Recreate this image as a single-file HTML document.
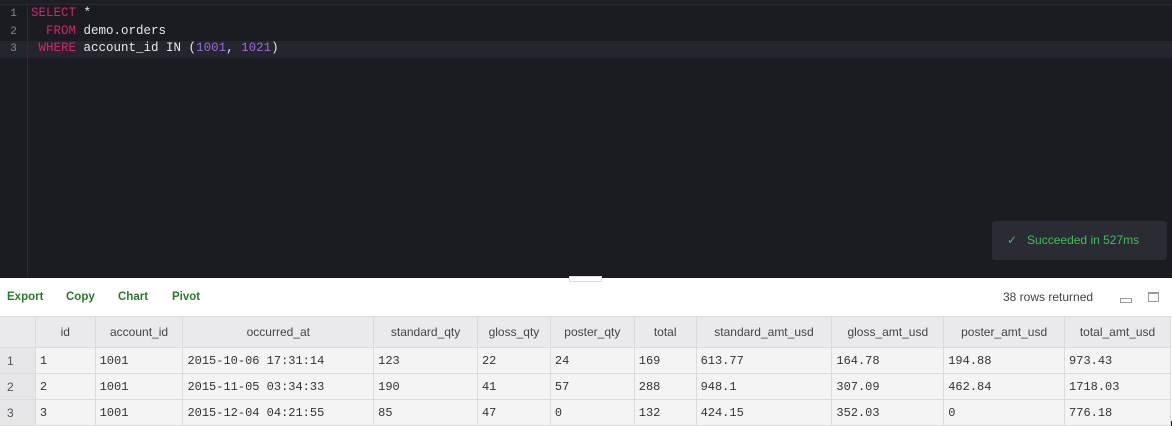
<!DOCTYPE html>
<html><head><style>
body{margin:0;width:1172px;height:421px;overflow:hidden;background:#1b1b22;font-family:"Liberation Sans",sans-serif;position:relative}
.top{position:absolute;left:0;top:0;width:1172px;height:4px;background:#1e1e25;border-bottom:1px solid #2a2a32}
.gut{position:absolute;left:27px;top:5px;width:1px;height:272px;background:#2c2c34}
.ln{position:absolute;left:0;width:27px;text-align:center;color:#8a8a92;font:11px "Liberation Mono",monospace}
.code{position:absolute;left:31px;font:12.5px "Liberation Mono",monospace;color:#e8e8ec;white-space:pre}
.kw{color:#d6246a}.num{color:#9b6bdb}
.hl{position:absolute;left:0;top:41px;width:1172px;height:17px;background:#25252d}
.toast{position:absolute;left:992px;top:221px;width:175px;height:39px;background:#2b2b33;border-radius:3px;color:#3fbf5a;font-size:12px;line-height:39px;box-sizing:border-box;padding-left:15px}
.panel{position:absolute;left:0;top:278px;width:1172px;height:143px;background:#fff}
.handle{position:absolute;left:569px;top:276px;width:31px;height:4px;border:1px solid #ddd;background:#fff}
.tb{position:absolute;top:291px;font-size:11.5px;font-weight:bold;color:#2a7a2a}
table{position:absolute;left:-1px;top:316px;border-collapse:collapse;font-size:12px;color:#333}
td{border:1px solid #dcdcdc;padding:0 4px;height:25px;white-space:nowrap;overflow:hidden;background:#f4f4f4}
tr.h td{background:#eaeaee;text-align:center;height:30px;color:#444}
td.r{background:#e6e6e9;color:#555;padding-left:7px}
td.m{font-family:"Liberation Mono",monospace;font-size:12px}
</style></head><body>
<div class="top"></div>
<div class="hl"></div>
<div class="gut"></div>
<div class="ln" style="top:8px">1</div>
<div class="ln" style="top:26px">2</div>
<div class="ln" style="top:43px">3</div>
<div class="code" style="top:6px"><span class="kw">SELECT</span> *</div>
<div class="code" style="top:24px">  <span class="kw">FROM</span> demo.orders</div>
<div class="code" style="top:41px"> <span class="kw">WHERE</span> account_id IN (<span class="num">1001</span>, <span class="num">1021</span>)</div>
<div class="toast">✓&nbsp;&nbsp; Succeeded in 527ms</div>
<div class="panel"></div>
<div class="handle"></div>
<div class="tb" style="left:7px">Export</div>
<div class="tb" style="left:66px">Copy</div>
<div class="tb" style="left:118px">Chart</div>
<div class="tb" style="left:172px">Pivot</div>
<div style="position:absolute;left:1003px;top:290px;font-size:12px;color:#444">38 rows returned</div>
<div style="position:absolute;left:1120px;top:298px;width:10px;height:3px;border:1px solid #999"></div>
<div style="position:absolute;left:1148px;top:292px;width:9px;height:7px;border:1px solid #999;border-top-width:2px"></div>
<table>
<colgroup><col style="width:36px"><col style="width:60px"><col style="width:88px"><col style="width:191px"><col style="width:104px"><col style="width:73px"><col style="width:84px"><col style="width:62px"><col style="width:136px"><col style="width:112px"><col style="width:121px"><col style="width:106px"></colgroup>
<tr class="h"><td class="r"></td><td>id</td><td>account_id</td><td>occurred_at</td><td>standard_qty</td><td>gloss_qty</td><td>poster_qty</td><td>total</td><td>standard_amt_usd</td><td>gloss_amt_usd</td><td>poster_amt_usd</td><td>total_amt_usd</td></tr>
<tr><td class="r">1</td><td class="m">1</td><td class="m">1001</td><td class="m">2015-10-06 17:31:14</td><td class="m">123</td><td class="m">22</td><td class="m">24</td><td class="m">169</td><td class="m">613.77</td><td class="m">164.78</td><td class="m">194.88</td><td class="m">973.43</td></tr>
<tr><td class="r">2</td><td class="m">2</td><td class="m">1001</td><td class="m">2015-11-05 03:34:33</td><td class="m">190</td><td class="m">41</td><td class="m">57</td><td class="m">288</td><td class="m">948.1</td><td class="m">307.09</td><td class="m">462.84</td><td class="m">1718.03</td></tr>
<tr><td class="r">3</td><td class="m">3</td><td class="m">1001</td><td class="m">2015-12-04 04:21:55</td><td class="m">85</td><td class="m">47</td><td class="m">0</td><td class="m">132</td><td class="m">424.15</td><td class="m">352.03</td><td class="m">0</td><td class="m">776.18</td></tr>
</table>
</body></html>
